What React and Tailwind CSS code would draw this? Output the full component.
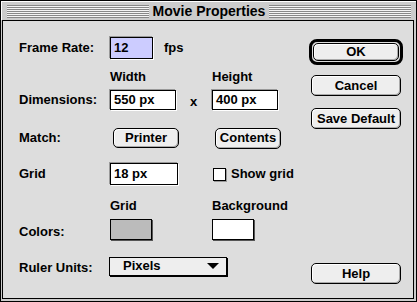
const font = { fontFamily: '"Liberation Sans", Arial, sans-serif' };

const stripes =
  "bg-[repeating-linear-gradient(to_bottom,#888888_0px,#888888_1px,#f4f4f4_1px,#f4f4f4_2px)]";

const Field = ({ value, width, bg = "bg-white" }) => (
  <div
    className={`${width} h-full border border-black ${bg} flex items-center pl-[3px] shadow-[1px_1px_0_#ffffff,-1px_-1px_0_#999999]`}
  >
    {value}
  </div>
);

const PushButton = ({ children, width = "w-[90px]", height = "h-[21px]" }) => (
  <div
    className={`${width} ${height} border border-black rounded-[5px] bg-[#eeeeee] flex items-center justify-center shadow-[inset_-1px_-1px_0_#aaaaaa,inset_1px_1px_0_#ffffff]`}
  >
    {children}
  </div>
);

const Swatch = ({ bg }) => (
  <div className={`w-[42px] h-[21px] border border-black ${bg} shadow-[1px_1px_0_#555555]`}></div>
);

export default function App() {
  return (
    <div
      className="w-[417px] h-[302px] border border-black bg-[#cccccc] flex flex-col text-[13px] font-bold text-black select-none"
      style={font}
    >
      {/* title bar */}
      <div className="h-[19px] flex items-center px-[5px] border-t border-l border-white">
        <div className={`flex-1 h-[13px] ${stripes}`}></div>
        <div className="px-[4px] leading-[15px] text-[14px]">Movie Properties</div>
        <div className={`flex-1 h-[13px] ${stripes}`}></div>
      </div>

      {/* body */}
      <div className="flex-1 ml-px mr-[2px] mb-[2px] border border-black bg-[#dddddd] flex">
        <div className="w-[306px] pl-[16px] flex flex-col">
          <div className="mt-[16px] h-[22px] flex items-center">
            <div className="w-[91px]">Frame Rate:</div>
            <Field value="12" width="w-[43px]" bg="bg-[#ccccff]" />
            <div className="ml-[11px]">fps</div>
          </div>

          <div className="mt-[11px] h-[14px] flex items-center">
            <div className="w-[91px]"></div>
            <div className="w-[102px]">Width</div>
            <div>Height</div>
          </div>

          <div className="mt-[6px] h-[20px] flex items-center">
            <div className="w-[91px]">Dimensions:</div>
            <Field value="550 px" width="w-[66px]" />
            <div className="w-[36px] pl-[14px] pt-[3px]">x</div>
            <Field value="400 px" width="w-[66px]" />
          </div>

          <div className="mt-[18px] h-[20px] flex items-center">
            <div className="w-[94px]">Match:</div>
            <div className="w-[102px] h-full">
              <PushButton width="w-[66px]" height="h-[20px]">Printer</PushButton>
            </div>
            <PushButton width="w-[66px]" height="h-[21px]">Contents</PushButton>
          </div>

          <div className="mt-[15px] h-[22px] flex items-center">
            <div className="w-[91px]">Grid</div>
            <Field value="18 px" width="w-[68px]" />
            <div className="ml-[35px] w-[13px] h-[13px] border border-black bg-white shadow-[1px_1px_0_#999999]"></div>
            <div className="ml-[5px]">Show grid</div>
          </div>

          <div className="mt-[14px] h-[14px] flex items-center">
            <div className="w-[91px]"></div>
            <div className="w-[102px]">Grid</div>
            <div>Background</div>
          </div>

          <div className="mt-[5px] h-[22px] flex items-center">
            <div className="w-[91px] pt-[6px]">Colors:</div>
            <div className="w-[102px]">
              <Swatch bg="bg-[#bbbbbb]" />
            </div>
            <Swatch bg="bg-white" />
          </div>

          <div className="mt-[16px] h-[20px] flex items-center">
            <div className="w-[90px] pt-[4px]">Ruler Units:</div>
            <div className="w-[118px] h-[19px] border border-black bg-[#eeeeee] shadow-[1px_1px_0_#000000] flex items-center pl-[13px] pr-[7px]">
              <div className="flex-1">Pixels</div>
              <svg width="12" height="7" viewBox="0 0 12 7">
                <polygon points="0,0 12,0 6,6" fill="#000000" />
              </svg>
            </div>
          </div>
        </div>

        <div className="flex flex-col">
          <div className="mt-[18px] w-[94px] h-[26px] border-[3px] border-black rounded-[8px] p-px">
            <PushButton width="w-full" height="h-full">OK</PushButton>
          </div>
          <div className="mt-[10px] ml-[2px]">
            <PushButton>Cancel</PushButton>
          </div>
          <div className="mt-[12px] ml-[2px]">
            <PushButton>Save Default</PushButton>
          </div>
          <div className="mt-[134px] ml-[2px]">
            <PushButton>Help</PushButton>
          </div>
        </div>
      </div>
    </div>
  );
}
